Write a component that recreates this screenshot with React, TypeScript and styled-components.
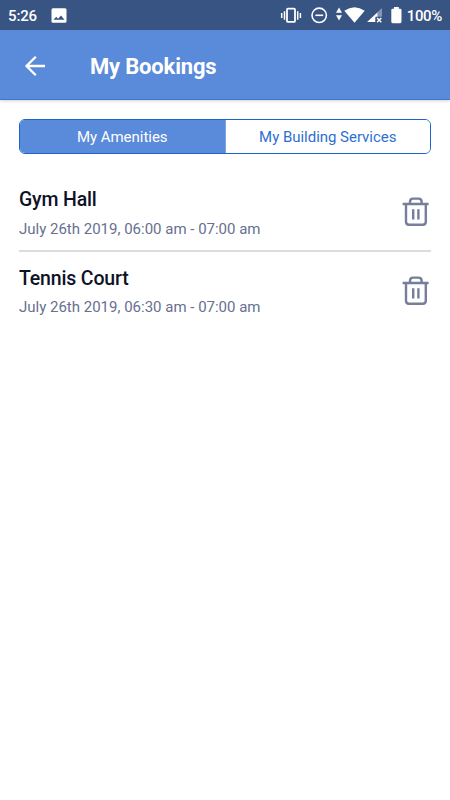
import React from 'react';
import styled, { createGlobalStyle } from 'styled-components';

const GlobalStyle = createGlobalStyle`
  * { box-sizing: border-box; }
  body { margin: 0; background: #fff; font-family: Roboto, "Liberation Sans", sans-serif; }
  svg { display: block; flex: none; }
`;

const Screen = styled.div`
  width: 450px;
  height: 800px;
  background: #fff;
  overflow: hidden;
`;

const StatusBar = styled.div`
  height: 30px;
  padding: 0 8px;
  display: flex;
  justify-content: space-between;
  align-items: center;
  background: #375483;
  color: #fff;
`;

const StatusGroup = styled.div`
  display: flex;
  align-items: center;
  height: 30px;
`;

const StatusText = styled.span<{ $spacing: number }>`
  font-size: 15px;
  font-weight: 500;
  line-height: 30px;
  letter-spacing: ${(p) => p.$spacing}px;
  padding-top: 1px;
  white-space: nowrap;
`;

const Header = styled.header`
  height: 70px;
  display: flex;
  align-items: center;
  gap: 44px;
  padding: 2px 24px 0;
  background: #5a8ada;
  border-bottom: 1px solid #3d78d0;
  box-shadow: 0 1px 3px rgba(60, 50, 40, 0.22);
`;

const BackButton = styled.button`
  width: 22px;
  height: 22px;
  padding: 0;
  border: 0;
  background: none;
`;

const Title = styled.h1`
  margin: 0;
  padding-top: 2px;
  color: #fff;
  font-size: 22px;
  line-height: 28px;
  font-weight: 700;
  letter-spacing: -0.18px;
`;

const Segments = styled.div`
  display: flex;
  margin: 19px 19px 0;
  height: 35px;
  border: 1px solid #1d63cd;
  border-radius: 6px;
  overflow: hidden;
`;

const Segment = styled.button<{ $active?: boolean }>`
  flex: 1;
  padding: 1px 0 0;
  border: 0;
  font-family: inherit;
  font-size: 15px;
  letter-spacing: -0.03px;
  color: ${(p) => (p.$active ? '#fff' : '#2d70d2')};
  background: ${(p) => (p.$active ? '#5a8ada' : '#fff')};

  & + & {
    border-left: 1px solid #7ea3e2;
  }
`;

const List = styled.div`
  margin: 19px 19px 0;
`;

const Row = styled.div`
  height: 78.6px;
  padding: 15px 2px 0 0;
  display: flex;
  justify-content: space-between;

  &:not(:last-child) {
    border-bottom: 2px solid #dcdcdc;
  }
`;

const Name = styled.div`
  font-size: 19.5px;
  line-height: 24px;
  font-weight: 500;
  letter-spacing: -0.16px;
  color: #0d1228;
`;

const Time = styled.div`
  margin-top: 6.8px;
  font-size: 15px;
  line-height: 20px;
  color: #67708f;
`;

const DeleteButton = styled.button`
  width: 27px;
  height: 30px;
  margin-top: 9px;
  padding: 0;
  border: 0;
  background: none;
`;

const TrashIcon = () => (
  <svg width="27" height="30" viewBox="402 197 27 30" fill="none" stroke="#767e9b" strokeWidth="2.4">
    <path d="M402.6 204h26M410 204v-2.2q0-3.2 3.2-3.2h5.2q3.2 0 3.2 3.2v2.2M406 204v17.8q0 3 3 3h13.8q3 0 3-3V204M413.2 209.2v10.2M418.4 209.2v10.2" />
  </svg>
);

const PictureIcon = () => (
  <svg width="16" height="15" viewBox="0 0 16 15">
    <rect width="15" height="14.5" rx="1.5" x=".5" y=".3" fill="#fff" />
    <path d="m2.5 11.8 2.7-3.1 1.8 2L10 7.6l3.5 4.2z" fill="#375483" />
  </svg>
);

const StatusIcons = () => (
  <svg width="127" height="30" viewBox="280 0 127 30" fill="none" stroke="#fff" strokeWidth="1.4">
    <rect x="287" y="8.7" width="8" height="13.2" rx="1" strokeWidth="1.8" />
    <path d="M281.7 13v5M284.5 11.2v8.6M297.7 11.2v8.6M300.4 13v5" strokeWidth="1.5" />
    <circle cx="319.2" cy="15.3" r="7.2" strokeWidth="1.6" />
    <path d="M315.4 15.3h7.8" strokeWidth="1.6" />
    <path d="M336 12.7 339 7.4l3 5.3zM336 15.2h6l-3 5.3z" fill="#fff" stroke="none" />
    <path d="M344.3 10.8q10.2-7.2 20.4 0L354.5 22.8z" fill="#fff" stroke="none" />
    <path d="M382 8v14h-14.8z" fill="#8395b4" stroke="none" />
    <path d="M377.4 12.4V17.2H375V22h-7.8z" fill="#fff" stroke="none" />
    <path d="M375.7 16.7h7v6h-7z" fill="#375483" stroke="none" />
    <path d="m377.1 18.1 4.2 4.2m0-4.2-4.2 4.2" />
    <path d="M394 7h4.8v1.7h1.3q1.4 0 1.4 1.4v11.7q0 1.4-1.4 1.4h-7.4q-1.4 0-1.4-1.4V10.1q0-1.4 1.4-1.4h1.3z" fill="#fff" stroke="none" />
  </svg>
);

const IconSlot = styled.span`
  margin-left: 14px;
`;

const bookings = [
  { name: 'Gym Hall', time: 'July 26th 2019, 06:00 am - 07:00 am' },
  { name: 'Tennis Court', time: 'July 26th 2019, 06:30 am - 07:00 am' },
];

export default function App() {
  return (
    <Screen>
      <GlobalStyle />
      <StatusBar>
        <StatusGroup>
          <StatusText $spacing={-0.15}>5:26</StatusText>
          <IconSlot><PictureIcon /></IconSlot>
        </StatusGroup>
        <StatusGroup>
          <StatusIcons />
          <StatusText $spacing={-0.35}>100%</StatusText>
        </StatusGroup>
      </StatusBar>
      <Header>
        <BackButton aria-label="Back">
          <svg width="22" height="22" viewBox="24 54 22 22" fill="none" stroke="#fff" strokeWidth="2.3">
            <path d="M45 65H27M35.8 55.7 26.5 65l9.3 9.3" />
          </svg>
        </BackButton>
        <Title>My Bookings</Title>
      </Header>
      <Segments>
        <Segment $active>My Amenities</Segment>
        <Segment>My Building Services</Segment>
      </Segments>
      <List>
        {bookings.map((b) => (
          <Row key={b.name}>
            <div>
              <Name>{b.name}</Name>
              <Time>{b.time}</Time>
            </div>
            <DeleteButton aria-label={`Delete ${b.name}`}><TrashIcon /></DeleteButton>
          </Row>
        ))}
      </List>
    </Screen>
  );
}
